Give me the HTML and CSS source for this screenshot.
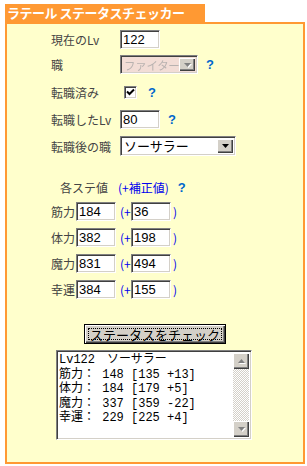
FILE: index.html
```html
<!DOCTYPE html>
<html lang="ja">
<head>
    <meta charset="UTF-8">
    <meta name="viewport" content="width=device-width, initial-scale=1.0">
    <title>ラテール ステータスチェッカー</title>
    <link rel="stylesheet" href="styles.css">
</head>
<body>

    <div class="tab">ラテール ステータスチェッカー</div>

    <div class="panel">
        <!-- 基本情報 -->
        <div class="row row-lv">
            <label class="lbl" for="lv">現在のLv</label>
            <input class="txt" type="text" id="lv" value="122">
        </div>
        <div class="row row-job">
            <label class="lbl">職</label>
            <span class="combo combo-off combo-short">
                <select class="combo-field" disabled><option>ファイター</option></select>
                <span class="combo-btn"><svg width="7" height="4" viewBox="0 0 7 4"><path d="M0 0h7L3.5 4z"/></svg></span>
            </span>
            <span class="help help-job">?</span>
        </div>
        <div class="row row-done">
            <label class="lbl">転職済み</label>
            <span class="chk"><svg width="9" height="9" viewBox="0 0 9 9"><path d="M1 3.5l2.5 2.5L8 1.5" fill="none" stroke="#000" stroke-width="2"/></svg></span>
            <span class="help help-done">?</span>
        </div>
        <div class="row row-lv2">
            <label class="lbl" for="lv2">転職したLv</label>
            <input class="txt" type="text" id="lv2" value="80">
            <span class="help help-lv2">?</span>
        </div>
        <div class="row row-job2">
            <label class="lbl">転職後の職</label>
            <span class="combo combo-long">
                <select class="combo-field"><option>ソーサラー</option></select>
                <span class="combo-btn"><svg width="7" height="4" viewBox="0 0 7 4"><path d="M0 0h7L3.5 4z"/></svg></span>
            </span>
        </div>

        <!-- ステータス -->
        <div class="stat-head">
            <span class="stat-title">各ステ値</span>
            <span class="plus">(+補正値)</span>
            <span class="help">?</span>
        </div>
        <div class="stat">
            <span class="stat-lbl">筋力</span><input class="txt" type="text" value="184">
            <span class="plus paren-l">(+</span><input class="txt" type="text" value="36"><span class="plus paren-r">)</span>
        </div>
        <div class="stat">
            <span class="stat-lbl">体力</span><input class="txt" type="text" value="382">
            <span class="plus paren-l">(+</span><input class="txt" type="text" value="198"><span class="plus paren-r">)</span>
        </div>
        <div class="stat">
            <span class="stat-lbl">魔力</span><input class="txt" type="text" value="831">
            <span class="plus paren-l">(+</span><input class="txt" type="text" value="494"><span class="plus paren-r">)</span>
        </div>
        <div class="stat">
            <span class="stat-lbl">幸運</span><input class="txt" type="text" value="384">
            <span class="plus paren-l">(+</span><input class="txt" type="text" value="155"><span class="plus paren-r">)</span>
        </div>

        <div class="actions">
            <button class="check-btn"><span class="focus">ステータスをチェック</span></button>
        </div>

        <!-- 結果 -->
        <div class="result">
            <div class="memo">
                <textarea class="memo-text" readonly>Lv122　ソーサラー
筋力： 148 [135 +13]
体力： 184 [179 +5]
魔力： 337 [359 -22]
幸運： 229 [225 +4]</textarea>
                <div class="scroll">
                    <span class="scroll-btn"><svg width="7" height="4" viewBox="0 0 7 4"><path d="M0 4h7L3.5 0z"/></svg></span>
                    <span class="scroll-track"></span>
                    <span class="scroll-btn"><svg width="7" height="4" viewBox="0 0 7 4"><path d="M0 0h7L3.5 4z"/></svg></span>
                </div>
            </div>
        </div>
    </div>

</body>
</html>
```

FILE: styles.css
```css
body {
    margin: 4px 0 0 5px;
    font-family: "Noto Sans CJK JP", sans-serif;
    font-size: 12px;
    color: #444;
    background: #fff;
}

.tab {
    width: 198px;
    height: 18px;
    padding-left: 2px;
    background: #ff9933;
    color: #fff;
    font-weight: bold;
    font-size: 13px;
    letter-spacing: -0.5px;
    line-height: 18px;
    white-space: nowrap;
}

.panel {
    box-sizing: border-box;
    width: 300px;
    height: 442px;
    padding: 2px 0 0 44px;
    border: 2px solid #ff9933;
    background: #ffffcc;
}

.row {
    display: flex;
    align-items: center;
}

.row-lv { height: 26px; }
.row-job { height: 25px; }
.row-done { height: 30px; }
.row-lv2 { height: 25px; }
.row-job2 { height: 28px; }

.lbl {
    width: 69px;
    flex-shrink: 0;
}

/* sunken 3D edit box */
.txt {
    box-sizing: border-box;
    width: 40px;
    height: 19px;
    margin: 0;
    padding: 0 2px;
    border: 1px solid;
    border-color: #808080 #fff #fff #808080;
    box-shadow: inset 1px 1px 0 #404040, inset -1px -1px 0 #d4d0c8;
    background: #fff;
    font-family: "Liberation Sans", sans-serif;
    font-size: 13px;
    color: #000;
    outline: none;
}

.combo {
    box-sizing: border-box;
    display: inline-flex;
    height: 19px;
    padding: 2px;
    border: 1px solid;
    border-color: #808080 #fff #fff #808080;
    box-shadow: inset 1px 1px 0 #404040, inset -1px -1px 0 #d4d0c8;
    background: #fff;
}

.combo-short { width: 78px; }
.combo-long { width: 116px; height: 20px; }

.combo-field {
    flex: 1;
    min-width: 0;
    margin: 0;
    padding: 0 0 0 1px;
    border: 0;
    background: transparent;
    font-family: "Noto Sans CJK JP", sans-serif;
    font-size: 13px;
    line-height: 14px;
    color: #000;
    appearance: none;
    -webkit-appearance: none;
    outline: none;
}

.combo-btn {
    box-sizing: border-box;
    width: 16px;
    flex-shrink: 0;
    display: flex;
    align-items: center;
    justify-content: center;
    background: #d4d0c8;
    box-shadow: inset 1px 1px 0 #fff, inset -1px -1px 0 #404040, inset -2px -2px 0 #808080;
}

.combo-off {
    background: #f2ddd6;
}

.combo-off .combo-field {
    font-size: 11.5px;
    letter-spacing: -0.3px;
    color: #a0a0a0;
}

.combo-off .combo-btn svg {
    fill: #808080;
    filter: drop-shadow(1px 1px 0 #fff);
}

.help {
    color: #0066cc;
    font-family: "Liberation Sans", sans-serif;
    font-weight: bold;
    font-size: 13px;
}

.help-job { margin-left: 8px; }
.help-done { margin-left: 11px; }
.help-lv2 { margin-left: 8px; }

.chk {
    box-sizing: border-box;
    width: 13px;
    height: 13px;
    margin-left: 4px;
    display: flex;
    align-items: center;
    justify-content: center;
    border: 1px solid;
    border-color: #808080 #fff #fff #808080;
    box-shadow: inset 1px 1px 0 #404040, inset -1px -1px 0 #d4d0c8;
    background: #fff;
}

.stat-head {
    display: flex;
    align-items: center;
    height: 22px;
    margin-top: 16px;
}

.stat-title {
    margin-left: 9px;
    width: 58px;
}

.plus {
    color: #0000ee;
}

.stat-head .help {
    margin-left: 9px;
}

.stat {
    display: flex;
    align-items: center;
    height: 26px;
}

.stat-lbl {
    width: 25px;
}

.paren-l {
    width: 11px;
    margin-left: 4px;
}

.paren-r {
    margin-left: 2px;
}

.actions {
    margin-top: 22px;
    padding-left: 33px;
}

.check-btn {
    box-sizing: border-box;
    width: 142px;
    height: 20px;
    margin: 0;
    padding: 3px;
    display: flex;
    border: 1px solid #000;
    background: #d4d0c8;
    box-shadow: inset 1px 1px 0 #fff, inset -1px -1px 0 #404040, inset -2px -2px 0 #808080;
    font-family: "Noto Sans CJK JP", sans-serif;
    font-size: 13px;
    color: #000;
}

.focus {
    flex: 1;
    border: 1px dotted #000;
    line-height: 11px;
}

.result {
    margin-top: 6px;
    padding-left: 5px;
}

.memo {
    box-sizing: border-box;
    display: flex;
    width: 196px;
    height: 90px;
    padding: 2px;
    border: 1px solid;
    border-color: #808080 #fff #fff #808080;
    box-shadow: inset 1px 1px 0 #404040, inset -1px -1px 0 #d4d0c8;
    background: #fff;
}

.memo-text {
    flex: 1;
    min-width: 0;
    margin: 0;
    padding: 0;
    border: 0;
    resize: none;
    overflow: hidden;
    font-family: "Liberation Mono", "Noto Sans CJK JP", monospace;
    font-size: 12px;
    line-height: 14.5px;
    color: #000;
    outline: none;
}

.scroll {
    width: 16px;
    display: flex;
    flex-direction: column;
}

.scroll-btn {
    box-sizing: border-box;
    height: 16px;
    display: flex;
    align-items: center;
    justify-content: center;
    background: #d4d0c8;
    box-shadow: inset 1px 1px 0 #fff, inset -1px -1px 0 #404040, inset -2px -2px 0 #808080;
}

.scroll-btn svg {
    fill: #808080;
    filter: drop-shadow(1px 1px 0 #fff);
}

.scroll-track {
    flex: 1;
    background: repeating-conic-gradient(#d4d0c8 0 25%, #fff 0 50%) 0 0 / 2px 2px;
}
```
